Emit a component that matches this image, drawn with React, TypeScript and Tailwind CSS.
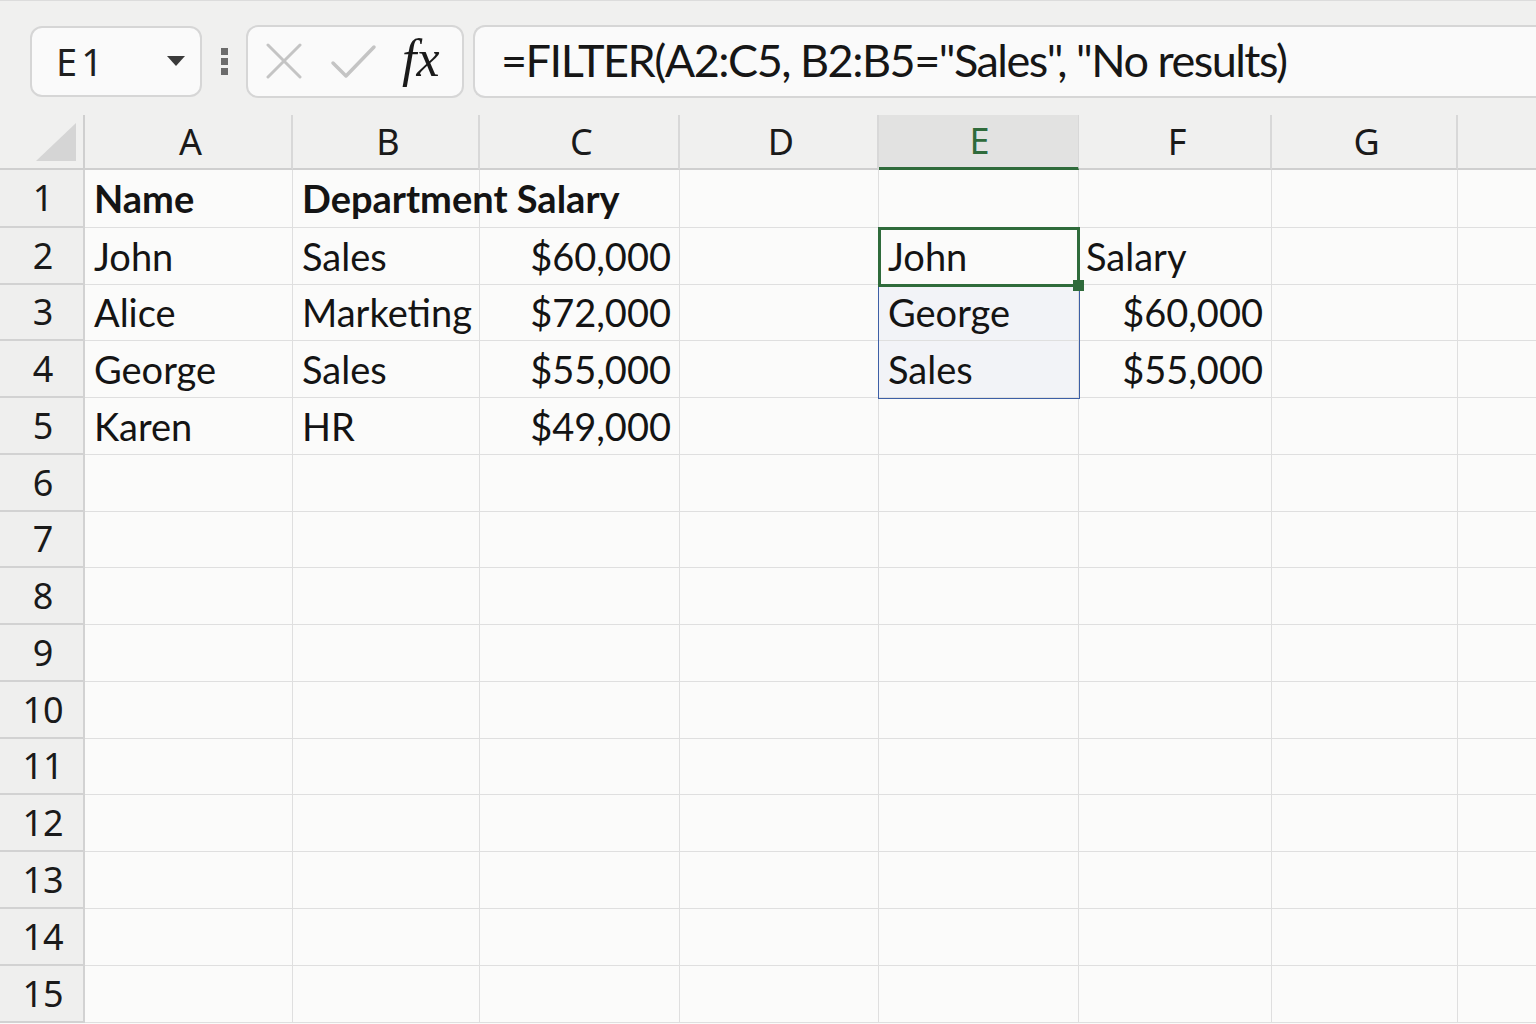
import React from "react";

const colWidths = [85, 208, 187, 200, 199, 200, 193, 186, 90];
const colLetters = ["", "A", "B", "C", "D", "E", "F", "G", ""];
const rowBounds = [170, 228, 285, 341, 398, 455, 512, 568, 625, 682, 739, 795, 852, 909, 966, 1023];

type Cell = { t: string; bold?: boolean; right?: boolean };
const data: Record<string, Cell> = {
  "1-1": { t: "Name", bold: true },
  "1-2": { t: "Department Salary", bold: true },
  "2-1": { t: "John" },
  "2-2": { t: "Sales" },
  "2-3": { t: "$60,000", right: true },
  "3-1": { t: "Alice" },
  "3-2": { t: "Marketing" },
  "3-3": { t: "$72,000", right: true },
  "4-1": { t: "George" },
  "4-2": { t: "Sales" },
  "4-3": { t: "$55,000", right: true },
  "5-1": { t: "Karen" },
  "5-2": { t: "HR" },
  "5-3": { t: "$49,000", right: true },
  "2-5": { t: "John" },
  "3-5": { t: "George" },
  "4-5": { t: "Sales" },
  "2-6": { t: "Salary" },
  "3-6": { t: "$60,000", right: true },
  "4-6": { t: "$55,000", right: true },
};

const cellFont = { fontFamily: "Lato, 'Noto Sans', sans-serif" };
const hdrFont = { fontFamily: "'Noto Sans', 'Open Sans', sans-serif" };

export default function App() {
  const rows = rowBounds.slice(1).map((b, i) => b - rowBounds[i]);
  return (
    <div className="w-[1536px] h-[1024px] overflow-hidden bg-[#fbfbfa] flex flex-col">
      {/* Formula bar */}
      <div className="h-[115px] shrink-0 bg-[#f0f0ef] border-t border-[#dcdcdc] flex items-center pl-[30px] pt-[6px]">
        <div className="w-[172px] h-[71px] rounded-[12px] border-2 border-[#d6d6d6] bg-[#fafafa] flex items-center pl-[24px] pr-[14px] justify-between">
          <span className="text-[38px] text-[#1f1f1f] tracking-[4px]" style={hdrFont}>E1</span>
          <svg width="20" height="12" viewBox="0 0 20 12"><path d="M1 1 L19 1 L10 11 Z" fill="#3a3a3a" /></svg>
        </div>
        <div className="w-[44px] flex flex-col items-center gap-[3px]">
          <div className="w-[7px] h-[7px] bg-[#6b6b6b]" />
          <div className="w-[7px] h-[7px] bg-[#6b6b6b]" />
          <div className="w-[7px] h-[7px] bg-[#6b6b6b]" />
        </div>
        <div className="w-[218px] h-[73px] rounded-[12px] border-2 border-[#d6d6d6] bg-[#fafafa] flex items-center pl-[18px]">
          <svg width="36" height="36" viewBox="0 0 36 36"><path d="M2 2 L34 34 M34 2 L2 34" stroke="#c4c4c4" strokeWidth="3" strokeLinecap="round" /></svg>
          <svg width="48" height="36" viewBox="0 0 48 36" className="ml-[28px]"><path d="M3 20 L16 33 L44 4" stroke="#c4c4c4" strokeWidth="3.5" fill="none" strokeLinecap="round" strokeLinejoin="round" /></svg>
          <span className="ml-[24px] text-[52px] italic text-[#1a1a1a] leading-none -mt-[4px]" style={{ fontFamily: "'Liberation Serif', 'DejaVu Serif', serif" }}>fx</span>
        </div>
        <div className="ml-[9px] flex-1 h-[73px] rounded-l-[12px] border-2 border-r-0 border-[#d6d6d6] bg-[#fafafa] flex items-center pl-[26px]">
          <span className="text-[45px] text-[#161616] tracking-[-1.5px] whitespace-nowrap" style={cellFont}>=FILTER(A2:C5, B2:B5="Sales", "No results)</span>
        </div>
      </div>

      {/* Grid */}
      <div className="relative flex-1">
        <div className="grid" style={{ gridTemplateColumns: colWidths.map((w) => w + "px").join(" "), gridTemplateRows: "55px " + rows.map((h) => h + "px").join(" ") }}>
          {colLetters.map((l, c) => {
            if (c === 0)
              return (
                <div key="corner" className="bg-[#f0f0ef] border-r-2 border-b-2 border-[#cfcfcf] relative flex items-end justify-end pr-[7px] pb-[7px]">
                  <svg width="40" height="38" viewBox="0 0 40 38"><path d="M40 0 L40 38 L0 38 Z" fill="#d5d5d5" /></svg>
                </div>
              );
            const sel = c === 5;
            return (
              <div
                key={"h" + c}
                className={
                  sel
                    ? "bg-[#e2e2e1] border-r border-[#d8d8d8] border-b-[3px] border-b-[#2f6b3b] flex items-center justify-center pl-[2px] text-[36px] text-[#2f6b3b]"
                    : "bg-[#f0f0ef] border-r-2 border-[#d8d8d8] border-b-2 border-b-[#cfcfcf] flex items-center justify-center pl-[5px] text-[36px] text-[#1a1a1a]"
                }
                style={hdrFont}
              >
                {l}
              </div>
            );
          })}
          {rows.map((_, ri) => {
            const r = ri + 1;
            return colWidths.map((_, c) => {
              if (c === 0)
                return (
                  <div key={r + "-0"} className="bg-[#efefee] border-r-2 border-b-2 border-[#d2d2d2] flex items-center justify-center pl-[3px] text-[36px] text-[#1a1a1a]" style={hdrFont}>
                    {r}
                  </div>
                );
              const d = data[r + "-" + c];
              const tint = c === 5 && (r === 3 || r === 4);
              return (
                <div
                  key={r + "-" + c}
                  className={
                    "border-r border-b border-[#dfdfdf] flex items-center whitespace-nowrap overflow-visible text-[38px] text-[#141414] " +
                    (tint ? "bg-[#f2f3f7] " : "") +
                    (d && d.right ? "justify-end pr-[8px]" : c === 6 ? "pl-[7px]" : "pl-[9px]") +
                    (d && d.bold ? " font-bold" : "")
                  }
                  style={cellFont}
                >
                  {d ? <span className="relative z-10">{d.t}</span> : null}
                </div>
              );
            });
          })}
        </div>
        <div className="absolute left-[878px] top-[112px] w-[202px] h-[60px] border-[3px] border-[#2f6b3b] pointer-events-none" />
        <div className="absolute left-[878px] top-[172px] w-[202px] h-[112px] border border-t-0 border-[#3d5fa6] pointer-events-none" />
        <div className="absolute left-[1073px] top-[165px] w-[11px] h-[11px] bg-[#2f6b3b] pointer-events-none" />
      </div>
    </div>
  );
}
